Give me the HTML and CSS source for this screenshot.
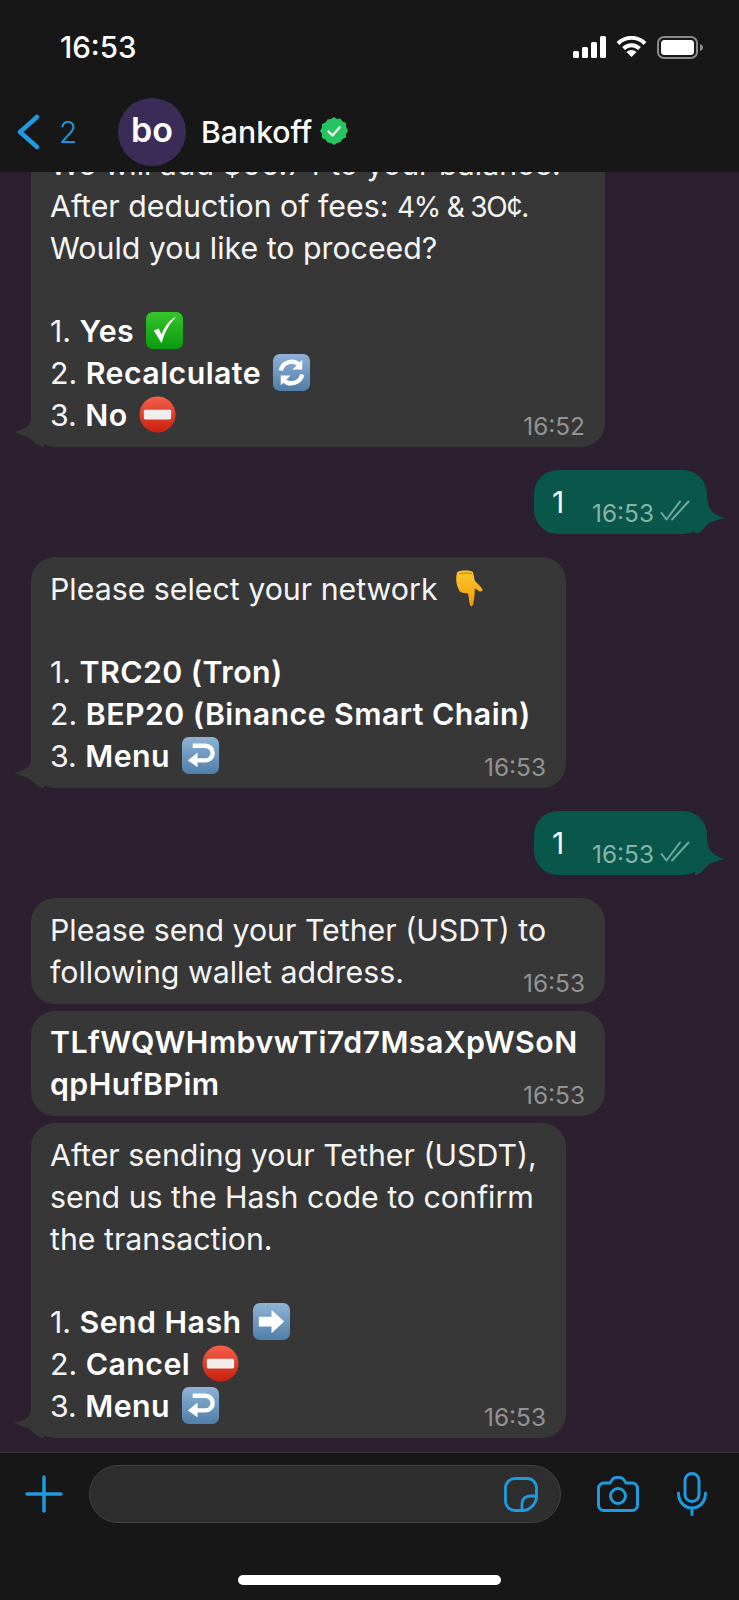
FILE: index.html
```html
<!DOCTYPE html>
<html lang="en">
<head>
  <meta charset="UTF-8" />
  <title>Bankoff</title>
  <link rel="stylesheet" href="styles.css">
</head>
<body>
  <svg class="defs" width="0" height="0">
    <defs>
      <linearGradient id="blue" x1="0" y1="0" x2="0" y2="1">
        <stop offset="0" stop-color="#8fb3d6"/>
        <stop offset="1" stop-color="#4f7ea8"/>
      </linearGradient>
      <linearGradient id="green" x1="0" y1="0" x2="0" y2="1">
        <stop offset="0" stop-color="#35c52b"/>
        <stop offset="1" stop-color="#0a9a10"/>
      </linearGradient>
      <linearGradient id="red" x1="0" y1="0" x2="0" y2="1">
        <stop offset="0" stop-color="#f4604a"/>
        <stop offset="1" stop-color="#c9200f"/>
      </linearGradient>
      <linearGradient id="yellow" x1="0" y1="0" x2="0" y2="1">
        <stop offset="0" stop-color="#fdc92e"/>
        <stop offset="1" stop-color="#f09a0c"/>
      </linearGradient>
      <symbol id="e-check" viewBox="0 0 40 40">
        <rect x="1" y="1" width="38" height="38" rx="7" fill="url(#green)"/>
        <path d="M9 20l8 13C20 22 25 13 32 6c-7 3-12 10-15 18l-3-6z" fill="#fff"/>
      </symbol>
      <symbol id="e-refresh" viewBox="0 0 40 40">
        <rect x="1" y="1" width="38" height="38" rx="7" fill="url(#blue)"/>
        <path d="M9 18a11.5 11.5 0 0 1 19-6" fill="none" stroke="#fff" stroke-width="4.5"/>
        <path d="M31 7v10H21z" fill="#fff"/>
        <path d="M31 22a11.5 11.5 0 0 1-19 6" fill="none" stroke="#fff" stroke-width="4.5"/>
        <path d="M9 33V23h10z" fill="#fff"/>
      </symbol>
      <symbol id="e-stop" viewBox="0 0 40 40">
        <circle cx="20" cy="20" r="18.5" fill="url(#red)"/>
        <rect x="6" y="15" width="28" height="10" rx="1.5" fill="#f1eeee"/>
      </symbol>
      <symbol id="e-return" viewBox="0 0 40 40">
        <rect x="1" y="1" width="38" height="38" rx="7" fill="url(#blue)"/>
        <path d="M12 10h13a7.5 7.5 0 0 1 0 15H15" fill="none" stroke="#fff" stroke-width="4.5"/>
        <path d="M17 17v15L7 25z" fill="#fff"/>
      </symbol>
      <symbol id="e-arrow" viewBox="0 0 40 40">
        <rect x="1" y="1" width="38" height="38" rx="7" fill="url(#blue)"/>
        <path d="M7 15h13V8l13 12-13 12v-7H7z" fill="#fff"/>
      </symbol>
      <symbol id="e-hand" viewBox="0 0 28 40">
        <path d="M2 3c5-2 12-2 16 0 1 3 1 6 2 9 2 3 6 5 8 9 0 2-2 2-3 2l-5-3c0 6-1 13-2 17-1 2-2 2-3 0-1-4-1-8-2-12-5 0-9-1-10-5C1 15 0 9 2 3z" fill="url(#yellow)"/>
        <path d="M4 5c4-1 10-1 13 0" fill="none" stroke="#d98c0a" stroke-width="1.400"/>
      </symbol>
    </defs>
  </svg>

  <div class="page">
    <header class="top">
      <div class="status">
        <span class="clock">16:53</span>
        <div class="status-icons">
          <svg width="33" height="22" viewBox="0 0 33 22" fill="#fff">
            <rect x="0" y="15" width="6" height="7" rx="1.5"/>
            <rect x="9" y="11" width="6" height="11" rx="1.5"/>
            <rect x="18" y="6" width="6" height="16" rx="1.5"/>
            <rect x="27" y="0" width="6" height="22" rx="1.5"/>
          </svg>
          <svg width="31" height="21" viewBox="0 0 31 21" fill="none" stroke="#fff" stroke-width="4">
            <path d="M2 7.500a19 19 0 0 1 27 0"/>
            <path d="M7.500 12.500a11.500 11.500 0 0 1 16 0"/>
            <path d="M15.500 21l-5-5a7 7 0 0 1 10 0z" fill="#fff" stroke="none"/>
          </svg>
          <svg width="48" height="23" viewBox="0 0 48 23">
            <rect x="1" y="1" width="39" height="21" rx="6" fill="none" stroke="#8a8a8a" stroke-width="2"/>
            <rect x="4" y="4" width="33" height="15" rx="3.5" fill="#fff"/>
            <path d="M43 8c2 .5 3 2 3 3.500s-1 3-3 3.500z" fill="#8a8a8a"/>
          </svg>
        </div>
      </div>
      <nav class="nav">
        <svg class="back" width="24" height="36" viewBox="0 0 24 36" fill="none" stroke="#1f9ade" stroke-width="4.500" stroke-linecap="round" stroke-linejoin="round">
          <path d="M21 3L4 18l17 15"/>
        </svg>
        <span class="count">2</span>
        <div class="avatar">bo</div>
        <span class="name">Bankoff</span>
        <svg class="badge" width="28" height="28" viewBox="0 0 28 28">
          <path d="M14 0l3 2 3.500-.5 2 3 3.500 1.500 0 3.500L28 14l-2 3 0 3.500-3.500 1.500-2 3L17 26l-3 2-3-2-3.500-.5-2-3L2 21l0-4-2-3 2-3.500 0-3.500 3.500-1.500 2-3L11 2z" fill="#25c45f"/>
          <path d="M8.500 14.500l4 4 7-8" fill="none" stroke="#f2fff6" stroke-width="2.400" stroke-linecap="round" stroke-linejoin="round"/>
        </svg>
      </nav>
    </header>

    <main class="chat">
      <div class="bubble in wide">
        <p>We will add $66.74 to your balance.</p>
        <p>After deduction of fees: <span class="tight">4% &amp; 3O¢.</span></p>
        <p>Would you like to proceed?</p>
        <p>&nbsp;</p>
        <p>1. <b>Yes</b> <svg class="emoji"><use href="#e-check"/></svg></p>
        <p>2. <b>Recalculate</b> <svg class="emoji"><use href="#e-refresh"/></svg></p>
        <p>3. <b>No</b> <svg class="emoji"><use href="#e-stop"/></svg></p>
        <span class="time">16:52</span>
        <svg class="tail" width="30" height="30" viewBox="0 0 30 30"><path d="M17 0c0 8-4 12-17 15 7 3 13 4 17 7 4 4 8 8 13 8V0z"/></svg>
      </div>

      <div class="bubble out">
        <p>1</p>
        <span class="time">16:53</span>
        <svg class="ticks" width="30" height="21" viewBox="0 0 30 21" fill="none" stroke="#6fa99c" stroke-width="2" stroke-linecap="round" stroke-linejoin="round">
          <path d="M1.500 13l5 6.500L20 1.500"/><path d="M12 19.500L28.500 1.500"/>
        </svg>
        <svg class="tail" width="30" height="40" viewBox="0 0 30 40"><path d="M12 0c0 14 4 20 18 24-7 2-13 3-17 6-4 4-8 10-13 10V0z"/></svg>
      </div>

      <div class="bubble in mid">
        <p>Please select your network <svg class="emoji hand"><use href="#e-hand"/></svg></p>
        <p>&nbsp;</p>
        <p>1. <b>TRC20 (Tron)</b></p>
        <p>2. <b>BEP20 (Binance Smart Chain)</b></p>
        <p>3. <b>Menu</b> <svg class="emoji"><use href="#e-return"/></svg></p>
        <span class="time">16:53</span>
        <svg class="tail" width="30" height="30" viewBox="0 0 30 30"><path d="M17 0c0 8-4 12-17 15 7 3 13 4 17 7 4 4 8 8 13 8V0z"/></svg>
      </div>

      <div class="bubble out">
        <p>1</p>
        <span class="time">16:53</span>
        <svg class="ticks" width="30" height="21" viewBox="0 0 30 21" fill="none" stroke="#6fa99c" stroke-width="2" stroke-linecap="round" stroke-linejoin="round">
          <path d="M1.500 13l5 6.500L20 1.500"/><path d="M12 19.500L28.500 1.500"/>
        </svg>
        <svg class="tail" width="30" height="40" viewBox="0 0 30 40"><path d="M12 0c0 14 4 20 18 24-7 2-13 3-17 6-4 4-8 10-13 10V0z"/></svg>
      </div>

      <div class="bubble in wide">
        <p>Please send your Tether (USDT) to</p>
        <p>following wallet address.</p>
        <span class="time">16:53</span>
      </div>

      <div class="bubble in wide close">
        <p><b>TLfWQWHmbvwTi7d7MsaXpWSoN</b></p>
        <p><b>qpHufBPim</b></p>
        <span class="time">16:53</span>
      </div>

      <div class="bubble in mid close">
        <p>After sending your Tether (USDT),</p>
        <p>send us the Hash code to confirm</p>
        <p>the transaction.</p>
        <p>&nbsp;</p>
        <p>1. <b>Send Hash</b> <svg class="emoji"><use href="#e-arrow"/></svg></p>
        <p>2. <b>Cancel</b> <svg class="emoji"><use href="#e-stop"/></svg></p>
        <p>3. <b>Menu</b> <svg class="emoji"><use href="#e-return"/></svg></p>
        <span class="time">16:53</span>
        <svg class="tail" width="30" height="30" viewBox="0 0 30 30"><path d="M17 0c0 8-4 12-17 15 7 3 13 4 17 7 4 4 8 8 13 8V0z"/></svg>
      </div>
    </main>

    <footer class="bottom">
      <div class="composer">
        <svg width="38" height="38" viewBox="0 0 38 38" stroke="#1f9ade" stroke-width="3.500" stroke-linecap="round">
          <path d="M19 2v34M2 19h34"/>
        </svg>
        <div class="input">
          <svg width="34" height="35" viewBox="0 0 34 35" fill="none" stroke="#1f9ade" stroke-width="2.800" stroke-linejoin="round">
            <path d="M11 1.500h12a9.500 9.500 0 0 1 9.500 9.500v9C32.500 26 26 33.500 19 33.500h-8A9.500 9.500 0 0 1 1.500 24V11A9.500 9.500 0 0 1 11 1.500z"/>
            <path d="M32.500 19h-6C21 19 18 22 18 27v6.500"/>
          </svg>
        </div>
        <svg class="camera" width="42" height="36" viewBox="0 0 42 36" fill="none" stroke="#1f9ade" stroke-width="3">
          <path d="M7 7h6l2-3c1-1.500 2-2.500 4-2.500h4c2 0 3 1 4 2.500l2 3h6a5.500 5.500 0 0 1 5.500 5.500V29a5.500 5.500 0 0 1-5.500 5.500H7A5.500 5.500 0 0 1 1.500 29V12.500A5.500 5.500 0 0 1 7 7z"/>
          <circle cx="21" cy="20" r="7.500"/>
        </svg>
        <svg class="mic" width="30" height="44" viewBox="0 0 30 44" fill="none" stroke="#1f9ade" stroke-width="3" stroke-linecap="round">
          <rect x="8" y="1.500" width="14" height="28" rx="7"/>
          <path d="M1.500 21c0 9 6 15 13.500 15s13.500-6 13.500-15"/>
          <path d="M15 36v6.500"/>
        </svg>
      </div>
      <div class="home-bar"></div>
    </footer>
  </div>
</body>
</html>
```

FILE: styles.css
```css
/* Reset */
* { margin: 0; padding: 0; box-sizing: border-box; }

html, body {
  height: 100%;
  background: #171717;
  font-family: Inter, "Liberation Sans", sans-serif;
  color: #f5f5f5;
  overflow: hidden;
}

.defs { position: absolute; }

.page {
  height: 1600px;
  display: flex;
  flex-direction: column;
}

/* Status bar + nav */
.top {
  flex: 0 0 172px;
  background: #171717;
  position: relative;
  z-index: 1;
}
.status {
  height: 94px;
  padding: 31px 34px 0 60px;
  display: flex;
  justify-content: space-between;
  align-items: flex-start;
}
.clock {
  font-size: 29.5px;
  font-weight: 500;
  line-height: 33px;
  color: #fff;
}
.status-icons {
  display: flex;
  gap: 10px;
  padding-top: 5px;
}
.nav {
  display: flex;
  align-items: center;
  padding-left: 16px;
  height: 74px;
  margin-top: 1px;
}
.count {
  margin-left: 19px;
  font-size: 30px;
  font-weight: 300;
  color: #1f9ade;
  width: 59px;
}
.avatar {
  width: 68px;
  height: 68px;
  border-radius: 50%;
  background: #3b2c57;
  color: #fff;
  font-size: 34px;
  font-weight: 600;
  text-align: center;
  line-height: 64px;
}
.name {
  margin-left: 15px;
  font-size: 30.2px;
  font-weight: 500;
  color: #fff;
}
.badge { margin-left: 8px; margin-top: -2px; }

/* Messages */
.chat {
  flex: 1;
  min-height: 0;
  overflow: hidden;
  background: #2b1f30;
  display: flex;
  flex-direction: column;
  justify-content: flex-end;
  padding: 0 14px 14px 31px;
}
.bubble {
  position: relative;
  flex: none;
  background: #373737;
  border-radius: 24px;
  padding: 11.5px 19px 10.5px;
  margin-top: 23px;
  font-size: 30.3px;
  line-height: 41.8px;
}
.bubble p { height: 41.8px; }
.bubble:first-child { margin-top: 0; }
.bubble.close { margin-top: 7px; }
.bubble b { font-weight: 600; color: #fff; letter-spacing: 0.45px; }
.tight { font-size: 28px; letter-spacing: -1.2px; }
.wide { width: 574px; }
.mid { width: 535px; }

.bubble.out {
  align-self: flex-end;
  width: 173px;
  height: 64px;
  padding: 12px 0 0 18px;
  margin-right: 18px;
  background: #09574b;
}
.time {
  position: absolute;
  right: 20px;
  bottom: 8px;
  font-size: 24.4px;
  line-height: 26px;
  color: #939393;
}
.out .time {
  right: 53px;
  bottom: 8px;
  color: #86b4aa;
}
.ticks {
  position: absolute;
  right: 17px;
  bottom: 13px;
}

.tail {
  position: absolute;
  left: -17px;
  bottom: 0;
  fill: #373737;
}
.out .tail {
  left: auto;
  right: -18px;
  fill: #09574b;
}

.emoji {
  width: 39px;
  height: 39px;
  vertical-align: -8px;
  margin-left: 2px;
}
.hand { margin-left: 9px; width: 28px; }

/* Composer */
.bottom {
  flex: 0 0 148px;
  background: #171717;
  border-top: 1px solid #3a3340;
  display: flex;
  flex-direction: column;
  padding-top: 12px;
}
.composer {
  display: flex;
  align-items: center;
  padding-left: 25px;
  height: 58px;
}
.input {
  width: 472px;
  height: 58px;
  margin-left: 26px;
  background: #2e2e2e;
  border: 1px solid #414141;
  border-radius: 29px;
  display: flex;
  align-items: center;
  justify-content: flex-end;
  padding-right: 22px;
}
.camera { margin-left: 36px; }
.mic { margin-left: 38px; }
.home-bar {
  width: 263px;
  height: 10px;
  border-radius: 5px;
  background: #fff;
  margin: 52px auto 0;
}
```
